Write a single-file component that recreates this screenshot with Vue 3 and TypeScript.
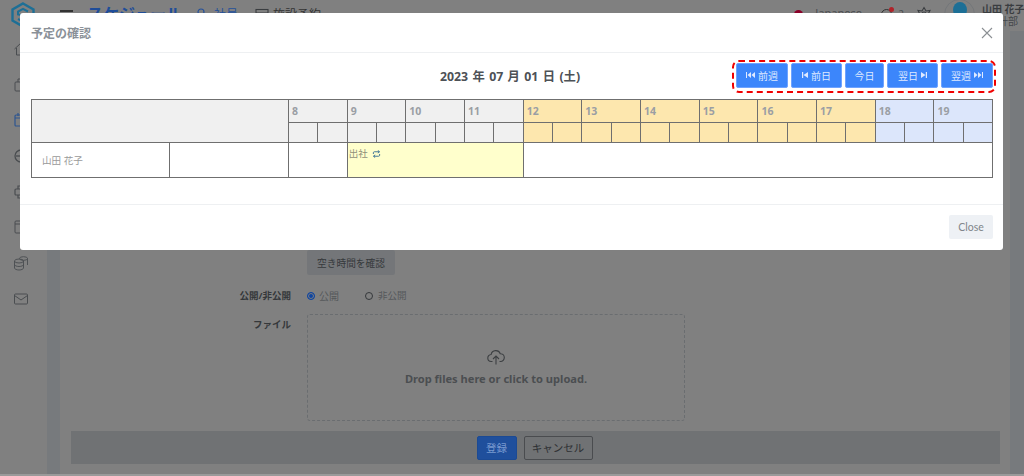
<script setup lang="ts">
interface Hour { label: string; tone: string }
const hours: Hour[] = [8, 9, 10, 11, 12, 13, 14, 15, 16, 17, 18, 19].map((h) => ({
  label: String(h),
  tone: h >= 18 ? 'night' : h >= 12 ? 'noon' : 'day',
}))
</script>

<template>
  <div class="page">
    <header class="topbar">
      <svg class="logo" viewBox="0 0 24 26" width="24" height="26" fill="none" stroke="#1d6f96" stroke-width="2.4">
        <path d="M12 1.5 22.5 7.5v11L12 24.5 1.5 18.5v-11z" />
        <path d="M17 9.5 12 6.8 7 9.5v3l10 2v2.5L12 19.6 7 17" stroke-width="2" />
      </svg>
      <span class="burger"></span>
      <span class="brand">スケジュール</span>
      <svg class="nav-ico" viewBox="0 0 14 14" width="14" height="14" fill="none" stroke="#24509a" stroke-width="1.2">
        <circle cx="7" cy="4" r="3" /><path d="M1.5 13c.5-4 3-5 5.500-5s5 1 5.500 5" />
      </svg>
      <span class="toplink blue">社員</span>
      <svg class="nav-ico second" viewBox="0 0 14 14" width="14" height="14" fill="none" stroke="#3a3d40" stroke-width="1.1">
        <rect x="1" y="1.500" width="12" height="11" /><path d="M1 5h12M5 5v7.500M9 5v7.500" />
      </svg>
      <span class="toplink tight">施設予約</span>
      <div class="top-right">
        <span class="flag"></span>
        <span class="lang">Japanese ⌄</span>
        <span class="bell"><i></i></span>
        <span class="count">2</span>
        <svg class="gear" viewBox="0 0 16 16" width="16" height="16" fill="none" stroke="#3a3d40" stroke-width="1.1">
          <path d="M8 1.500 10 5l4-.5-1.800 3.500L14 11.500l-4-.5-2 3.500L6 11l-4 .5L3.800 8 2 4.500 6 5z" />
          <circle cx="8" cy="8" r="2" />
        </svg>
        <span class="avatar"><i></i></span>
        <div class="who">
          <b>山田 花子</b>
          <span>会計部</span>
        </div>
      </div>
    </header>

    <div class="shell">
      <nav class="sidebar">
        <svg viewBox="0 0 16 16" fill="none" stroke="#4a4d50" stroke-width="1"><path d="M1.500 8 8 2l6.500 6M3.500 7v7h9V7" /></svg>
        <svg viewBox="0 0 16 16" fill="none" stroke="#4a4d50" stroke-width="1"><rect x="2" y="5" width="12" height="9" rx="1" /><path d="M5 5V2h6v3" /></svg>
        <svg viewBox="0 0 16 16" fill="none" stroke="#2d5590" stroke-width="1.200"><rect x="2" y="3" width="12" height="11" rx="1" /><path d="M5 1v3M11 1v3M2 6h12" /></svg>
        <svg viewBox="0 0 16 16" fill="none" stroke="#4a4d50" stroke-width="1.300"><circle cx="8" cy="8" r="6" /><path d="M3 8h10" /></svg>
        <svg viewBox="0 0 16 16" fill="none" stroke="#4a4d50" stroke-width="1.200"><rect x="2" y="5" width="12" height="6" rx="1" /><path d="M5 5V2h6v3M5 11v3h6v-3" /></svg>
        <svg viewBox="0 0 16 16" fill="none" stroke="#4a4d50" stroke-width="1"><rect x="2" y="2" width="12" height="12" rx="1" /><path d="M2 5h12" /></svg>
        <svg viewBox="0 0 16 16" fill="none" stroke="#4a4d50" stroke-width=".9"><ellipse cx="10.500" cy="3.500" rx="4" ry="1.800" /><path d="M14.500 3.500v6.500" /><ellipse cx="6" cy="6" rx="4.500" ry="2" /><path d="M1.500 6v7c0 1 2 2 4.500 2s4.500-1 4.500-2V6M1.500 9.500c0 1 2 2 4.500 2s4.500-1 4.500-2" /></svg>
        <svg viewBox="0 0 16 16" fill="none" stroke="#4a4d50" stroke-width="1"><rect x="1.500" y="3" width="13" height="10" rx="1" /><path d="m1.500 4.500 6.500 4.500 6.500-4.500" /></svg>
      </nav>
      <div class="gutter"></div>
      <main class="content">
        <div class="form">
          <div class="field">
            <span></span>
            <button class="check" type="button">空き時間を確認</button>
          </div>
          <div class="field radios">
            <label class="lbl">公開/非公開</label>
            <div class="radio-set">
              <span class="radio on"></span><span class="radio-txt first">公開</span>
              <span class="radio"></span><span class="radio-txt second">非公開</span>
            </div>
          </div>
          <div class="field file">
            <label class="lbl">ファイル</label>
            <div class="drop">
              <svg viewBox="0 0 18 16" width="18" height="16" fill="none" stroke="#3c3f42" stroke-width="1.100">
                <path d="M5.500 12.500H4.500a3.500 3.500 0 0 1-.4-7 4.800 4.800 0 0 1 9.200-.8 3.900 3.900 0 0 1 .2 7.800h-1" />
                <path d="M9 15.500V7.500M6 10l3-3 3 3" />
              </svg>
              <span>Drop files here or click to upload.</span>
            </div>
          </div>
          <div class="actions">
            <button class="save" type="button">登録</button>
            <button class="cancel" type="button">キャンセル</button>
          </div>
        </div>
      </main>
      <div class="gutter right"></div>
    </div>

    <section class="modal">
      <div class="modal-head">
        <h2>予定の確認</h2>
        <svg viewBox="0 0 12 12" width="12" height="12" stroke="#8b8f93" stroke-width="1.100"><path d="M1 1l10 10M11 1 1 11" /></svg>
      </div>
      <div class="modal-body">
        <div class="toolbar">
          <span></span>
          <strong class="date">2023 年 07 月 01 日 (土)</strong>
          <div class="pager">
            <button type="button">
              <svg viewBox="0 0 9 6" width="9" height="6" fill="#dfe9ff"><path d="M0 0h1v6H0zM5 0v6L1.500 3zM9 0v6L5.500 3z" /></svg>
              前週
            </button>
            <button type="button">
              <svg viewBox="0 0 6 6" width="6" height="6" fill="#dfe9ff"><path d="M0 0h1.200v6H0zM6 0v6L1.500 3z" /></svg>
              前日
            </button>
            <button type="button">今日</button>
            <button type="button">
              翌日
              <svg viewBox="0 0 6 6" width="6" height="6" fill="#dfe9ff"><path d="M6 0H4.800v6H6zM0 0v6l4.500-3z" /></svg>
            </button>
            <button type="button">
              翌週
              <svg viewBox="0 0 9 6" width="9" height="6" fill="#dfe9ff"><path d="M9 0H8v6h1zM4 0v6l3.500-3zM0 0v6l3.500-3z" /></svg>
            </button>
          </div>
        </div>
        <table class="sheet">
          <colgroup>
            <col class="c-name" />
            <col class="c-note" />
            <col v-for="n in 24" :key="n" class="c-slot" />
          </colgroup>
          <thead>
            <tr class="r-hour">
              <th class="corner" colspan="2" rowspan="2"></th>
              <th v-for="h in hours" :key="h.label" colspan="2" :class="h.tone">{{ h.label }}</th>
            </tr>
            <tr class="r-half">
              <template v-for="h in hours" :key="h.label">
                <th :class="h.tone"></th>
                <th :class="h.tone"></th>
              </template>
            </tr>
          </thead>
          <tbody>
            <tr class="r-body">
              <td class="name">山田 花子</td>
              <td></td>
              <td colspan="2"></td>
              <td colspan="6" class="event">
                出社
                <svg viewBox="0 0 10 9" width="9" height="8" fill="none" stroke="#3f7596" stroke-width="1.100">
                  <path d="M1.500 4.500V3a1 1 0 0 1 1-1H8M6.500 .5 8.500 2 6.500 3.500M8.500 4.500V6a1 1 0 0 1-1 1H2M3.500 5.500 1.500 7 3.500 8.500" />
                </svg>
              </td>
              <td colspan="16"></td>
            </tr>
          </tbody>
        </table>
      </div>
      <div class="modal-foot">
        <button class="close" type="button">Close</button>
      </div>
    </section>
  </div>
</template>

<style>
html,
body {
  margin: 0;
  background: #808080;
}
</style>

<style scoped>
.page {
  position: relative;
  width: 1024px;
  height: 476px;
  overflow: hidden;
  display: flex;
  flex-direction: column;
  padding-bottom: 2px;
  box-sizing: border-box;
  background: #9a9a9a;
  font-family: "Noto Sans", "Noto Sans CJK JP", sans-serif;
  color: #3a3d40;
}
button {
  font-family: inherit;
  cursor: pointer;
}

/* dimmed page behind the dialog */
.topbar {
  flex: none;
  height: 31px;
  display: flex;
  align-items: center;
  background: #808080;
  box-sizing: border-box;
  padding-left: 11px;
}
.logo {
  margin-top: -2px;
}
.burger {
  width: 13px;
  height: 2px;
  margin-left: 25px;
  margin-top: -9px;
  background: #333;
  box-shadow: 0 5px 0 #333, 0 10px 0 #333;
}
.brand {
  margin-left: 14px;
  margin-top: -6px;
  font-size: 16px;
  font-weight: 700;
  color: #1f4d99;
  white-space: nowrap;
}
.nav-ico {
  margin-left: 12px;
  margin-top: -2px;
}
.nav-ico.second {
  margin-left: 17px;
}
.toplink {
  margin-left: 6px;
  margin-top: -4px;
  font-size: 12px;
  color: #333;
}
.toplink.tight {
  margin-left: 4px;
}
.toplink.blue {
  color: #24509a;
}
.top-right {
  margin-left: auto;
  display: flex;
  align-items: center;
  height: 100%;
  margin-top: -3px;
}
.flag {
  width: 9px;
  height: 9px;
  border-radius: 50%;
  background: #8a0028;
}
.lang {
  margin-left: 12px;
  margin-top: -4px;
  width: 58px;
  font-size: 11px;
  color: #4a4d50;
  white-space: nowrap;
}
.bell {
  position: relative;
  margin-left: 8px;
  width: 9px;
  height: 9px;
  border: 1px solid #333;
  border-radius: 50%;
}
.bell i {
  position: absolute;
  top: -3px;
  right: -3px;
  width: 5px;
  height: 5px;
  border-radius: 50%;
  background: #b0232a;
}
.count {
  margin-left: 6px;
  font-size: 10px;
  color: #4a4d50;
}
.gear {
  margin-left: 12px;
}
.avatar {
  position: relative;
  margin-left: 12px;
  width: 31px;
  height: 31px;
  border: 1px solid #74777a;
  border-radius: 50%;
  box-sizing: border-box;
}
.avatar i {
  position: absolute;
  left: 8px;
  top: 2px;
  width: 14px;
  height: 16px;
  border-radius: 50%;
  background: #1d6f96;
}
.who {
  margin-left: 7px;
  width: 42px;
  white-space: nowrap;
  display: flex;
  flex-direction: column;
  font-size: 10px;
  line-height: 12px;
  margin-top: 1px;
}
.who b {
  font-weight: 700;
  color: #3a3d40;
}
.who span {
  color: #44474a;
  font-size: 10px;
  padding-right: 6px;
  text-align: right;
}

.shell {
  flex: 1;
  min-height: 0;
  display: flex;
}
.sidebar {
  flex: none;
  width: 47px;
  box-sizing: border-box;
  padding: 10px 0 0 13px;
  display: flex;
  flex-direction: column;
  gap: 19.700px;
  background: #808080;
}
.sidebar svg {
  width: 16px;
  height: 16px;
}
.gutter {
  flex: none;
  width: 13px;
  background: #777a7d;
}
.gutter.right {
  flex: 1;
  width: auto;
}
.content {
  flex: none;
  width: 950px;
  box-sizing: border-box;
  padding: 219px 10px 0 11px;
  background: #808080;
}
.form {
  display: flex;
  flex-direction: column;
}
.field {
  display: grid;
  grid-template-columns: 220px 1fr;
  column-gap: 16px;
}
.lbl {
  text-align: right;
  font-size: 9.500px;
  font-weight: 700;
  color: #35383b;
}
.check {
  justify-self: start;
  width: 88px;
  height: 25px;
  padding: 0;
  border: 0;
  border-radius: 2px;
  background: #747679;
  font-size: 9.700px;
  color: #36393c;
}
.radios {
  margin-top: 13px;
  height: 16px;
  line-height: 16px;
}
.radio-set {
  display: flex;
  align-items: center;
}
.radio {
  box-sizing: border-box;
  width: 8px;
  height: 8px;
  border: 1px solid #35383b;
  border-radius: 50%;
}
.radio.on {
  background: #0f45a0;
  border-color: #0f45a0;
  box-shadow: inset 0 0 0 1px #808080;
}
.radio-txt {
  margin-left: 4px;
  font-size: 10px;
  color: #55585b;
}
.radio-txt.first {
  margin-right: 26px;
}
.radio-txt.second {
  margin-left: 5px;
  font-size: 9.500px;
}
.file {
  margin-top: 10px;
}
.file .lbl {
  padding-top: 3px;
}
.drop {
  box-sizing: border-box;
  width: 378px;
  height: 107px;
  border: 1px dashed #6a6d70;
  border-radius: 3px;
  display: flex;
  flex-direction: column;
  align-items: center;
  padding-top: 34px;
  gap: 6px;
  font-size: 11.100px;
  font-weight: 700;
  color: #4b4e51;
}
.actions {
  margin-top: 10px;
  height: 33px;
  display: flex;
  align-items: center;
  justify-content: center;
  gap: 7px;
  padding-right: 2px;
  background: #707274;
}
.save {
  width: 40px;
  height: 24px;
  padding: 0;
  border: 1px solid #1b4a94;
  border-radius: 2px;
  background: #1f4f9c;
  color: #7a9ad0;
  font-size: 10.500px;
}
.cancel {
  width: 69px;
  height: 24px;
  padding: 0;
  border: 1px solid #4a4c4f;
  border-radius: 2px;
  background: transparent;
  color: #2e3033;
  font-size: 10.500px;
}

/* dialog */
.modal {
  position: absolute;
  left: 20px;
  top: 13px;
  width: 983px;
  height: 237px;
  display: flex;
  flex-direction: column;
  background: #fff;
  border-radius: 3px;
}
.modal-head {
  flex: none;
  height: 40px;
  box-sizing: border-box;
  padding: 0 10px 0 11px;
  display: flex;
  align-items: center;
  justify-content: space-between;
  border-bottom: 1px solid #eef0f2;
}
.modal-head h2 {
  margin: 0;
  font-size: 12px;
  font-weight: 700;
  color: #8a9198;
}
.modal-body {
  flex: 1;
  padding: 0 9px 0 11px;
}
.toolbar {
  height: 46px;
  display: grid;
  grid-template-columns: 1fr auto 1fr;
  align-items: center;
}
.date {
  padding-right: 5px;
  font-size: 12.300px;
  font-weight: 700;
  color: #4d5156;
  white-space: nowrap;
  word-spacing: 1.200px;
}
.pager {
  justify-self: end;
  margin-right: -2px;
  box-sizing: border-box;
  height: 33px;
  display: flex;
  gap: 3px;
  padding: 1px 1px 2px 2px;
  border: 2px dashed #f00000;
  border-radius: 7px;
}
.pager button {
  display: flex;
  align-items: center;
  justify-content: center;
  gap: 3px;
  height: 25px;
  width: 52px;
  padding: 0;
  border: 1px solid #6fa3ff;
  border-radius: 2px;
  background: #3c86fb;
  color: #dfe9ff;
  font-size: 10px;
  white-space: nowrap;
}
.pager button:nth-child(3) {
  width: 39px;
}
.pager button:nth-child(2),
.pager button:nth-child(4) {
  width: 51px;
}
.sheet {
  table-layout: fixed;
  width: 961px;
  border-collapse: collapse;
}
.c-name {
  width: 138px;
}
.c-note {
  width: 119px;
}
.c-slot {
  width: 29.330px;
}
.sheet th,
.sheet td {
  border: 1px solid #6f6f6f;
  padding: 0;
  box-sizing: border-box;
}
.r-hour {
  height: 23px;
}
.r-half {
  height: 20px;
}
.r-body {
  height: 35px;
}
.sheet th {
  background: #f0f0f0;
  text-align: left;
  padding-left: 3px;
  font-size: 10.500px;
  font-weight: 700;
  color: #9a9ea4;
}
.sheet th.noon {
  background: #fde7ae;
}
.sheet th.night {
  background: #dce6fb;
}
.name {
  padding-left: 10px !important;
  font-size: 9.600px;
  color: #9a9a9a;
}
.event {
  padding: 4px 0 0 1px !important;
  vertical-align: top;
  background: #ffffcc;
  font-size: 9.500px;
  line-height: 14px;
  color: #90907a;
}
.event svg {
  margin-left: 2px;
  vertical-align: -1px;
}
.modal-foot {
  flex: none;
  height: 46px;
  box-sizing: border-box;
  padding: 10px 10px 0;
  display: flex;
  justify-content: flex-end;
  border-top: 1px solid #eef0f2;
}
.close {
  width: 44px;
  height: 24px;
  padding: 0;
  border: 0;
  border-radius: 2px;
  background: #eef1f5;
  color: #80858a;
  font-family: "Lato", "Noto Sans", sans-serif;
  font-size: 10.500px;
}
</style>
